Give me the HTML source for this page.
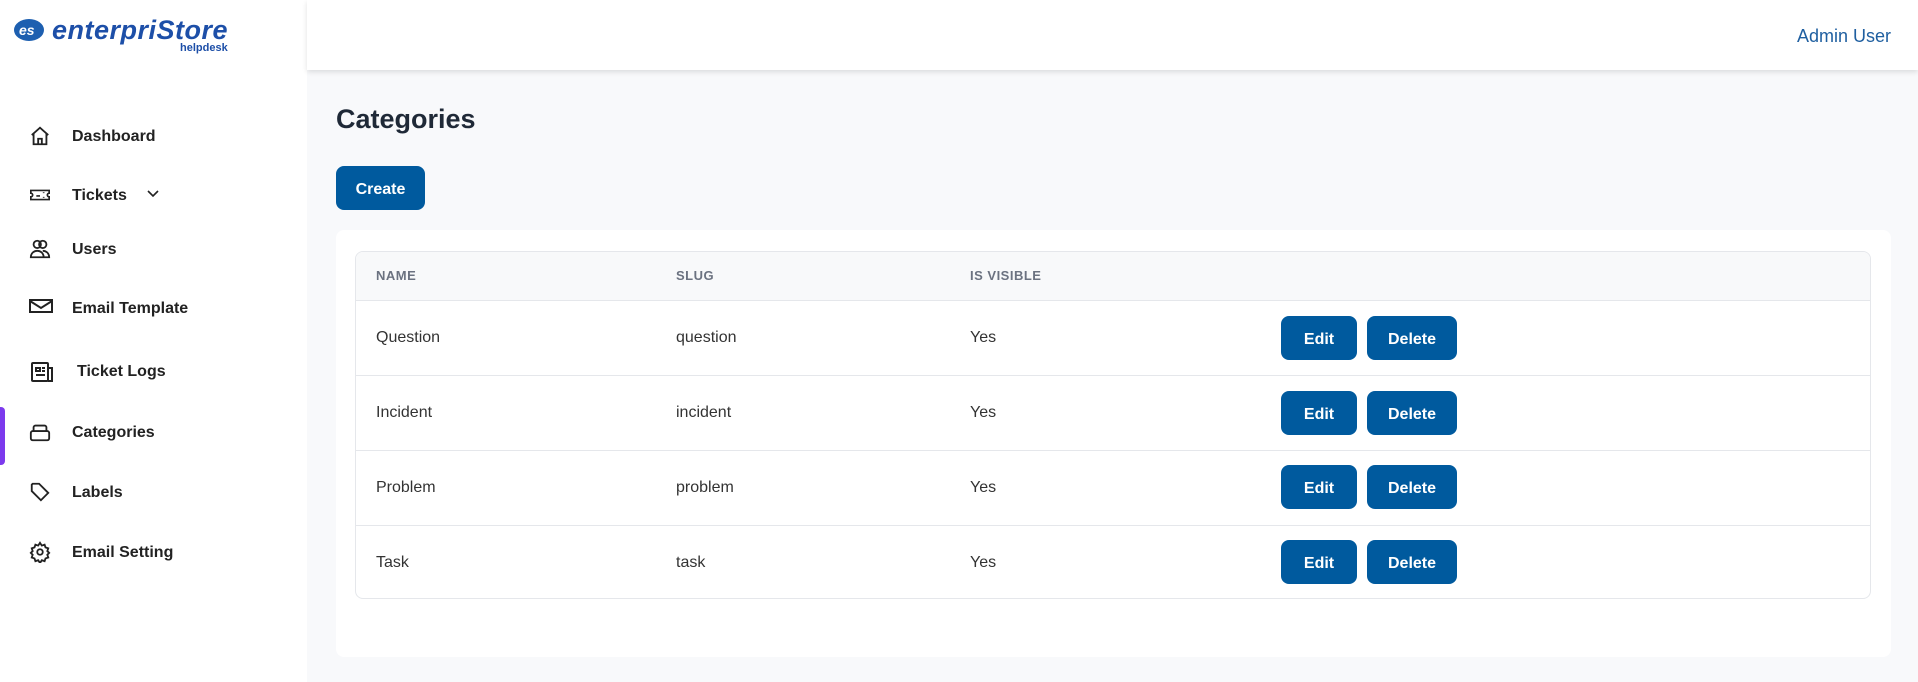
<!DOCTYPE html>
<html><head><meta charset="utf-8"><style>
*{box-sizing:border-box;margin:0;padding:0}
body{width:1918px;height:682px;overflow:hidden;background:#f8f9fb;font-family:"Liberation Sans",sans-serif;color:#1f2937;position:relative}
.side{position:absolute;left:0;top:0;width:307px;height:682px;background:#fff}
.hdr{position:absolute;left:307px;top:0;right:0;height:70px;background:#fff;box-shadow:0 2px 5px rgba(0,0,0,.12)}
.admin{position:absolute;right:27px;top:26px;font-size:18px;color:#1f5fa0}
.nav{position:absolute;left:0;font-size:16px;font-weight:700;color:#222;height:30px;width:300px}
.nav svg{position:absolute;left:29px;top:3px}
.nav span{position:absolute;left:72px;top:6px}
.ind{position:absolute;left:0;top:407px;width:5px;height:58px;background:#7c3aed;border-radius:0 4px 4px 0}
h1{position:absolute;left:336px;top:104px;font-size:27px;font-weight:600;color:#1f2937}
.btn{position:absolute;background:#005a9e;color:#fff;font-weight:700;font-size:16px;border-radius:8px;display:flex;align-items:center;justify-content:center;padding-top:3px}
.card{position:absolute;left:336px;top:230px;width:1555px;height:427px;background:#fff;border-radius:8px}
.tbl{position:absolute;left:355px;top:251px;width:1516px;height:348px;border:1px solid #e5e7eb;border-radius:8px;overflow:hidden}
.th{position:absolute;left:0;top:0;width:100%;height:49px;background:#f8f9fa;border-bottom:1px solid #e5e7eb}
.th div{position:absolute;top:16px;font-size:13px;font-weight:700;color:#6b7280;letter-spacing:.5px}
.row{position:absolute;left:0;width:100%;height:75px;border-bottom:1px solid #e5e7eb}
.row div.t{position:absolute;top:28px;font-size:16px;color:#333}
</style></head><body>
<div class="side">
 <svg style="position:absolute;left:14px;top:18px" width="220" height="36" viewBox="0 0 220 36">
  <ellipse cx="15" cy="12" rx="15" ry="11" fill="#1d5fb0"/>
  <text x="5" y="17" font-family="Liberation Sans" font-weight="700" font-style="italic" font-size="14" fill="#fff">es</text>
  <text x="38" y="21" font-family="Liberation Sans" font-weight="700" font-style="italic" font-size="27" fill="#1d4fa8" letter-spacing="0.5">enterpriStore</text>
  <text x="166" y="33" font-family="Liberation Sans" font-weight="700" font-size="11" fill="#1d4fa8">helpdesk</text>
 </svg>
 <div class="nav" style="top:122px"><svg width="22" height="22" viewBox="0 0 24 24" fill="none" stroke="#222" stroke-width="2"><path d="M3 11l9-8 9 8M5 9v12h14V9M10 21v-6h4v6"/></svg><span>Dashboard</span></div>
 <div class="nav" style="top:181px"><svg width="22" height="22" viewBox="0 0 24 24" fill="none" stroke="#222" stroke-width="1.8"><path d="M2 7h20v3a2 2 0 000 4v3H2v-3a2 2 0 000-4z M8 13h4M16 9v1M16 14v1"/></svg><span>Tickets</span><svg style="left:146px;top:8px" width="14" height="10" viewBox="0 0 14 10" fill="none" stroke="#222" stroke-width="1.6"><path d="M2 2l5 5 5-5"/></svg></div>
 <div class="nav" style="top:235px"><svg width="22" height="22" viewBox="0 0 24 24" fill="none" stroke="#222" stroke-width="2"><circle cx="9" cy="7" r="4"/><circle cx="15" cy="7" r="4"/><path d="M2 21c0-5 4-7 7-7s7 2 7 7zM15 14c3 0 7 2 7 7h-6"/></svg><span>Users</span></div>
 <div class="nav" style="top:294px"><svg width="24" height="20" viewBox="0 0 24 20" fill="none" stroke="#222" stroke-width="2"><rect x="1" y="3" width="22" height="12"/><path d="M1 4l11 7 11-7"/></svg><span>Email Template</span></div>
 <div class="nav" style="top:357px"><svg width="26" height="24" viewBox="0 0 26 24" fill="none" stroke="#222" stroke-width="2"><rect x="3" y="3" width="16" height="18" rx="1"/><path d="M19 8h4v13h-4M7 8h4v3H7zM13 8h3M13 11h3M7 15h9"/></svg><span style="left:77px">Ticket Logs</span></div>
 <div class="nav" style="top:418px"><svg width="22" height="22" viewBox="0 0 24 24" fill="none" stroke="#222" stroke-width="2"><rect x="2" y="11" width="20" height="10" rx="2"/><path d="M5 11V7a2 2 0 012-2h10a2 2 0 012 2v4"/></svg><span>Categories</span></div>
 <div class="nav" style="top:478px"><svg width="22" height="22" viewBox="0 0 24 24" fill="none" stroke="#222" stroke-width="2"><path d="M3 4v7l10 10 8-8L11 3H4zM7 7h.01"/></svg><span>Labels</span></div>
 <div class="nav" style="top:538px"><svg width="22" height="22" viewBox="0 0 24 24" fill="none" stroke="#222" stroke-width="2"><circle cx="12" cy="12" r="3"/><path d="M12 2l2 3 3-1 1 3 3 1-1 3 2 2-2 2 1 3-3 1-1 3-3-1-2 3-2-3-3 1-1-3-3-1 1-3-2-2 2-2-1-3 3-1 1-3 3 1z"/></svg><span>Email Setting</span></div>
 <div class="ind"></div>
</div>
<div class="hdr"><div class="admin">Admin User</div></div>
<h1>Categories</h1>
<div class="btn" style="left:336px;top:166px;width:89px;height:44px">Create</div>
<div class="card"></div>
<div class="tbl">
 <div class="th"><div style="left:20px">NAME</div><div style="left:320px">SLUG</div><div style="left:614px">IS VISIBLE</div></div>
 <div class="row" style="top:49px"><div class="t" style="left:20px">Question</div><div class="t" style="left:320px">question</div><div class="t" style="left:614px">Yes</div></div>
 <div class="row" style="top:124px"><div class="t" style="left:20px">Incident</div><div class="t" style="left:320px">incident</div><div class="t" style="left:614px">Yes</div></div>
 <div class="row" style="top:199px"><div class="t" style="left:20px">Problem</div><div class="t" style="left:320px">problem</div><div class="t" style="left:614px">Yes</div></div>
 <div class="row" style="top:274px;border-bottom:none"><div class="t" style="left:20px">Task</div><div class="t" style="left:320px">task</div><div class="t" style="left:614px">Yes</div></div>
</div>
<div class="btn" style="left:1281px;top:316px;width:76px;height:44px">Edit</div><div class="btn" style="left:1367px;top:316px;width:90px;height:44px">Delete</div>
<div class="btn" style="left:1281px;top:391px;width:76px;height:44px">Edit</div><div class="btn" style="left:1367px;top:391px;width:90px;height:44px">Delete</div>
<div class="btn" style="left:1281px;top:465px;width:76px;height:44px">Edit</div><div class="btn" style="left:1367px;top:465px;width:90px;height:44px">Delete</div>
<div class="btn" style="left:1281px;top:540px;width:76px;height:44px">Edit</div><div class="btn" style="left:1367px;top:540px;width:90px;height:44px">Delete</div>
</body></html>
